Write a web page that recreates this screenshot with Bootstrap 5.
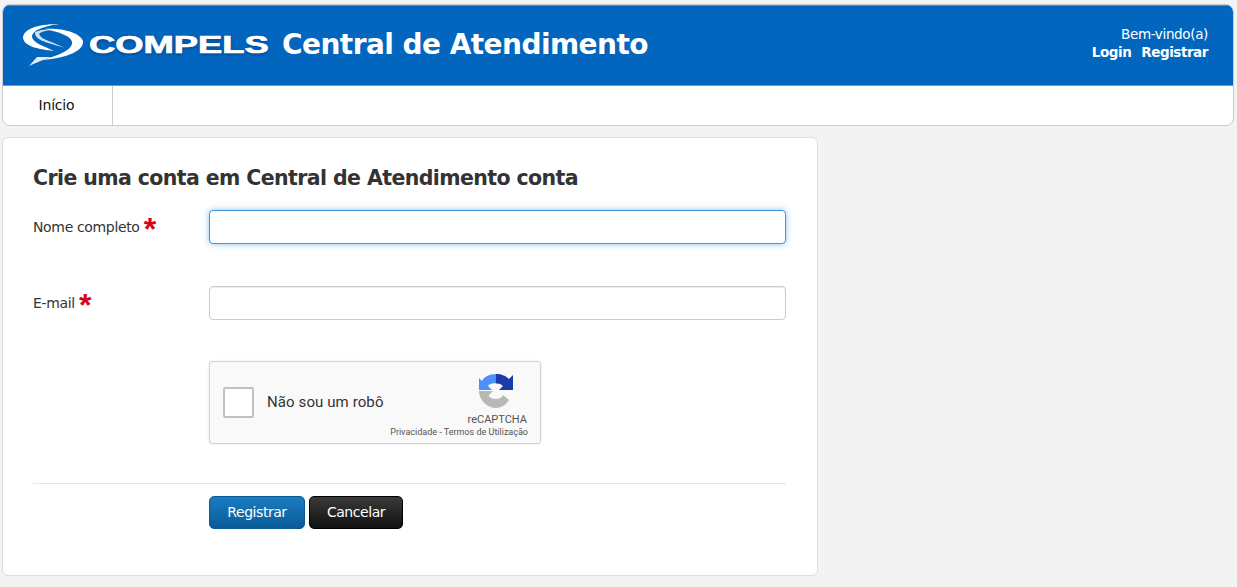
<!DOCTYPE html>
<html lang="pt"><head><meta charset="utf-8"><title>Central de Atendimento</title>
<link href="https://cdn.jsdelivr.net/npm/bootstrap@5.3.0/dist/css/bootstrap.min.css" rel="stylesheet">
<style>
html,body{height:100%}
body{background:#f3f3f4;font-family:"DejaVu Sans",sans-serif;color:#333;font-size:14px;overflow:hidden;padding:4px 3px 0 2px}
.shell{border-radius:8px;border:1px solid #ccc;background:#fff;margin-bottom:11px;height:122px;overflow:hidden}
.topbar{background:#0266bf;height:81px;border-top:1px solid #4a8fd0;border-bottom:1px solid #5f9ad6;padding-left:20px;padding-right:25px;color:#fff}
.logo-mark{flex:none;margin-top:-1px}
.logo-text{font:700 23px/1 "Liberation Sans",sans-serif;transform:scaleX(1.58);transform-origin:left center;width:181px;margin-left:5px;flex:none;-webkit-text-stroke:.7px #fff;text-shadow:0 1px 3px #003a75;margin-top:-1px}
.app-title{font-size:28px;font-weight:700;letter-spacing:-.55px;margin-left:12px;line-height:1;margin-top:-2px}
.user-box{font-size:13.5px;line-height:18px;text-align:right;margin-top:-5px;letter-spacing:-.35px}
.user-box a{color:#fff;font-weight:700;text-decoration:none;margin-left:6px;letter-spacing:-.45px}
.menu-link{display:block;width:110px;height:40px;line-height:39px;text-align:center;border-right:1px solid #ccc;color:#111;text-decoration:none;font-size:14px;letter-spacing:-.2px;padding-right:2px}
.sheet{width:816px;height:439px;background:#fff;border:1px solid #ddd;border-radius:6px;padding:25px 31px 0 30px}
.sheet h1{font-size:20.5px;font-weight:700;color:#333;margin:0 0 17px;line-height:30px;letter-spacing:-.6px}
.lbl{width:176px;flex:none;font-size:14px;letter-spacing:-.35px;color:#333;padding-top:7px}
.req{color:#d9001b;font-size:32px;font-weight:700;line-height:14px;vertical-align:-8px;font-family:"Liberation Sans",sans-serif}
.fld{width:577px;height:34px;border:1px solid #ccc;border-radius:4px;box-shadow:inset 0 1px 1px rgba(0,0,0,.08);outline:0;display:block;background:#fff}
.fld.on{border-color:#3d97dc;box-shadow:0 0 6px rgba(60,150,225,.6)}
.rowgap{margin-bottom:42px}
.captcha{margin-left:176px;width:332px;height:83px;background:#f9f9f9;border:1px solid #d3d3d3;border-radius:3px;box-shadow:0 0 3px rgba(0,0,0,.1);font-family:Roboto,sans-serif;margin-top:-1px}
.cbx{width:31px;height:31px;border:2px solid #c1c1c1;border-radius:2px;background:#fff;margin:0 13px;flex:none}
.cap-txt{font-size:15px;color:#333;letter-spacing:.1px}
.cap-side{margin-left:auto;width:90px;margin-right:12px;color:#555;padding-top:12px;height:100%}
.cap-mark{margin-right:15px;flex:none}
.cap-side .brand{font-size:11px;line-height:12px;margin-top:6px;margin-right:1px}
.cap-side .terms{font-size:9px;line-height:12px;white-space:nowrap}
.sep{border-top:1px solid #e5e5e5;margin:39px 0 12px;width:753px}
.btn-row{margin-left:176px;gap:4px}
.act{height:33px;font-size:14px;color:#fff;border-radius:5px;padding:0 0 2px;letter-spacing:-.45px;line-height:26px}
.act-blue{width:96px;background:linear-gradient(#1b7cc0,#0a5b99);border:1px solid #0a5b99}
.act-dark{width:94px;background:linear-gradient(#3a3a3a,#111);border:1px solid #000}
</style></head><body>
<header class="shell">
 <div class="topbar d-flex align-items-center">
  <svg class="logo-mark" width="61" height="43" viewBox="0 0 61 43" aria-hidden="true">
   <path d="M36 0C20 0 2 3 0 13c0 9 14 12 31 14C21 22 10 19 9 13 9 6 22 2 36 0Z" fill="#fff"/>
   <path d="M22 5c18-1 35 4 38 12 1 9-14 17-41 19 19-5 31-11 30-18C48 12 36 8 22 5Z" fill="#fff"/>
   <path d="M12 8c7-3 14-3 20-2-7 0-13 1-16 4 2 6 15 8 26 14C32 20 11 18 12 8Z" fill="#cfe0f2"/>
   <path d="M6 42l8-9h14C20 36 12 39 6 42Z" fill="#e6eff8"/>
  </svg>
  <div class="logo-text">COMPELS</div>
  <div class="app-title">Central de Atendimento</div>
  <div class="user-box ms-auto">Bem-vindo(a)<br><a href="#">Login</a> <a href="#">Registrar</a></div>
 </div>
 <nav class="d-flex"><a class="menu-link" href="#">Início</a></nav>
</header>
<main class="sheet">
 <h1>Crie uma conta em Central de Atendimento conta</h1>
 <div class="d-flex rowgap"><div class="lbl">Nome completo <span class="req">*</span></div><input class="fld on" type="text" aria-label="Nome completo"></div>
 <div class="d-flex rowgap"><div class="lbl">E-mail <span class="req">*</span></div><input class="fld" type="text" aria-label="E-mail"></div>
 <div class="captcha d-flex align-items-center">
  <div class="cbx"></div><div class="cap-txt">Não sou um robô</div>
  <div class="cap-side d-flex flex-column align-items-end">
   <svg class="cap-mark" width="34" height="34" viewBox="0 0 34 34" aria-hidden="true">
    <path d="M17 0C10 0 5 3 3 7L0 4v12h13l-4-4c1.500-2 4-3 8-2.500Z" fill="#4a90f5"/>
    <path d="M17 0c6 0 10 2 13 5l4-4v15H20l4-4c-2-2-4-2.700-7-2.500Z" fill="#1c3aa9"/>
    <path d="M0 17h14l-4.500 4.500C11 24 14 25 17 25c4 0 6-2 7-4l6 5c-3 5-8 8-13 8C8 34 0 26 0 17Z" fill="#b8b8b8"/>
   </svg>
   <div class="brand">reCAPTCHA</div>
   <div class="terms">Privacidade - Termos de Utilização</div>
  </div>
 </div>
 <div class="sep"></div>
 <div class="d-flex btn-row"><button class="btn act act-blue" type="button">Registrar</button><button class="btn act act-dark" type="button">Cancelar</button></div>
</main>
<script src="https://cdn.jsdelivr.net/npm/bootstrap@5.3.0/dist/js/bootstrap.bundle.min.js"></script>
</body></html>
